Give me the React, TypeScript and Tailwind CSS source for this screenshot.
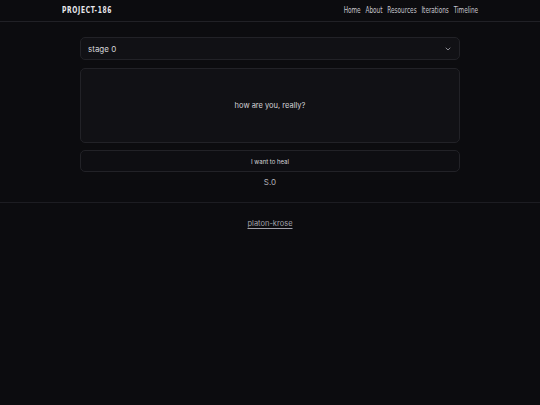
export default function App() {
  const navFont = {
    fontFamily: '"DejaVu Sans Condensed", "DejaVu Sans", sans-serif',
    fontStretch: "condensed",
  };
  return (
    <div
      className="min-h-[405px] bg-[#0c0c0f] text-[#e4e4e7]"
      style={{ fontFamily: 'Inter, "Liberation Sans", sans-serif' }}
    >
      <header className="border-b border-[#212126]">
        <div className="mx-[62px] h-[21px] flex items-center justify-between">
          <span
            className="inline-block origin-left scale-x-[0.83] text-[8px] font-bold tracking-[0.1em] text-[#e8e8ec] leading-none"
            style={navFont}
          >
            PROJECT-186
          </span>
          <nav
            className="flex origin-right scale-x-[0.8] gap-[6px] text-[8px] text-[#c9c9d0] leading-none"
            style={navFont}
          >
            <span>Home</span>
            <span>About</span>
            <span>Resources</span>
            <span>Iterations</span>
            <span>Timeline</span>
          </nav>
        </div>
      </header>

      <main className="w-[380px] mx-auto pt-[15px] pb-[14px] flex flex-col">
        <div className="h-[23px] rounded-[5px] border border-[#222227] bg-[#111115] flex items-center justify-between px-[7px]">
          <span className="text-[8px] text-[#d4d4d8]">stage 0</span>
          <svg width="8" height="8" viewBox="0 0 24 24" fill="none" stroke="#a1a1aa" strokeWidth="2.5" strokeLinecap="round" strokeLinejoin="round">
            <path d="m6 9 6 6 6-6" />
          </svg>
        </div>

        <div className="mt-[8px] h-[75px] rounded-[5px] border border-[#222227] bg-[#111115] flex items-center justify-center">
          <span className="text-[7.5px] text-[#d4d4d8]">how are you, really?</span>
        </div>

        <div className="mt-[7px] h-[22px] rounded-[5px] border border-[#222227] bg-[#0e0e12] flex items-center justify-center">
          <span className="text-[6px] text-[#d4d4d8]">I want to heal</span>
        </div>

        <div className="mt-[4px] text-center text-[8px] leading-[12px] text-[#b0b0b8]">S.0</div>
      </main>

      <footer className="border-t border-[#1d1d22] pt-[16px] text-center text-[7.5px] leading-[10px]">
        <span className="text-[#a1a1aa] underline underline-offset-2">platon-krose</span>
      </footer>
    </div>
  );
}
